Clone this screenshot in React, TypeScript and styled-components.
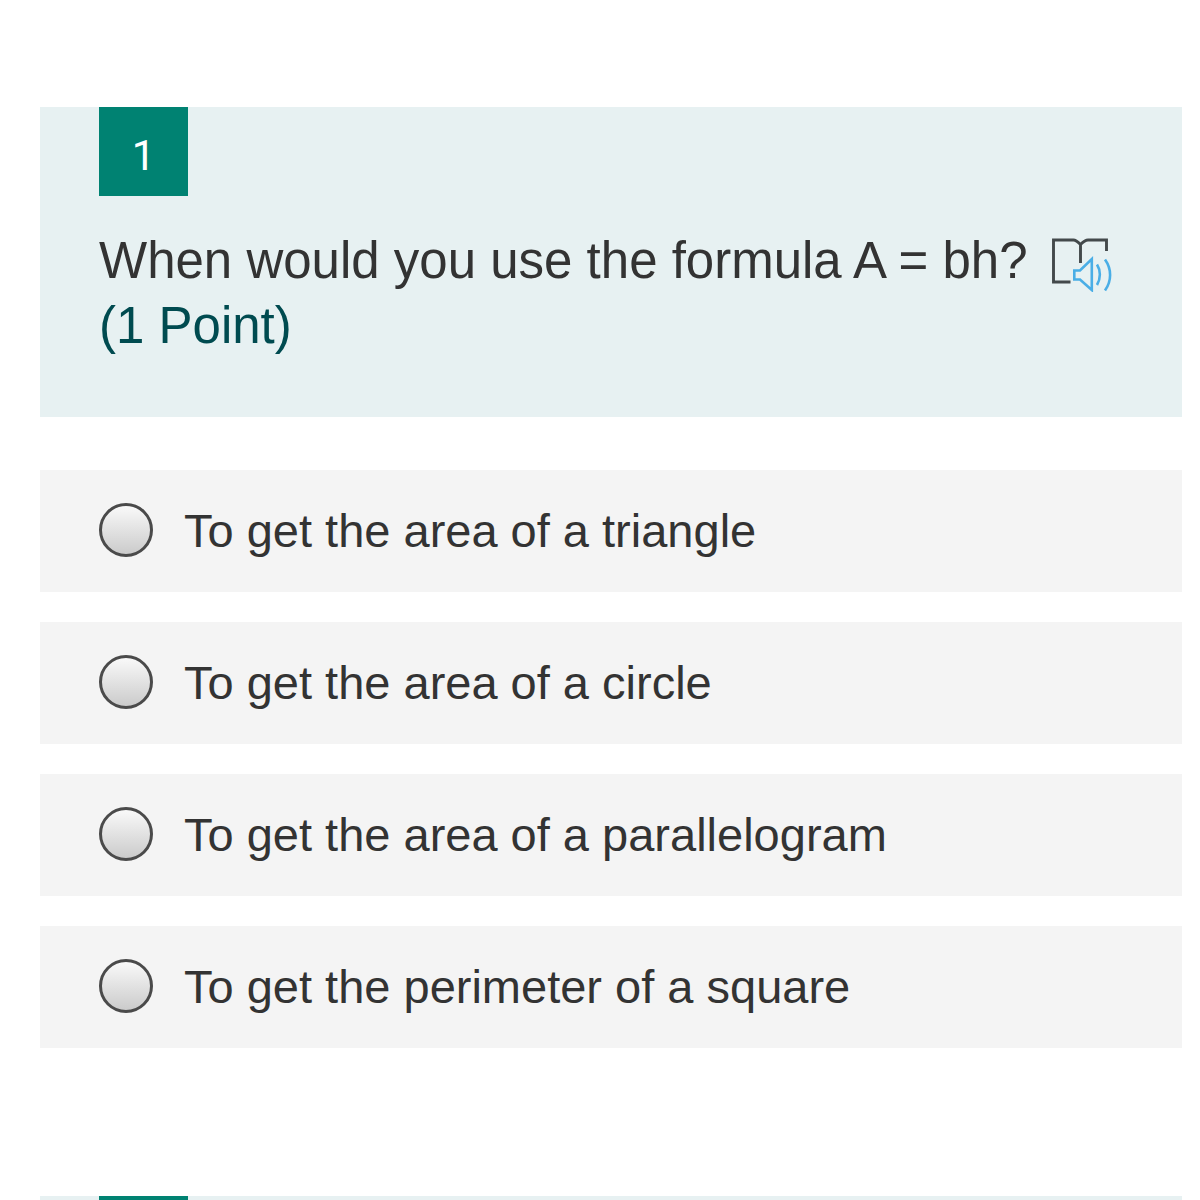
import React from "react";
import styled, { createGlobalStyle } from "styled-components";

const GlobalStyle = createGlobalStyle`
  *, *::before, *::after { box-sizing: border-box; }
  body {
    margin: 0;
    background: #ffffff;
    color: #333333;
    font-family: "Liberation Sans", Arial, Helvetica, sans-serif;
  }
`;

const Page = styled.main`
  height: 100vh;
  overflow: hidden;
  padding: 107px 18px 0 40px;
`;

const Question = styled.section`
  margin-bottom: 148px;
`;

const Header = styled.header`
  background: #e7f1f2;
  padding: 0 60px 59px 59px;
  margin-bottom: 53px;
`;

const Badge = styled.div`
  display: flex;
  align-items: center;
  justify-content: center;
  width: 89px;
  height: 89px;
  padding-top: 8px;
  margin-bottom: 32px;
  background: #008272;
  color: #ffffff;
  font-family: Roboto, "Liberation Sans", sans-serif;
  font-size: 42px;
  line-height: 48px;
`;

const Title = styled.h2`
  display: flex;
  align-items: center;
  gap: 24px;
  margin: 0;
  font-size: 51px;
  font-weight: 400;
  line-height: 65px;
`;

const Points = styled.p`
  margin: 0;
  color: #004b50;
  font-size: 51px;
  line-height: 65px;
`;

const ReaderButton = styled.button`
  display: flex;
  flex: none;
  padding: 9px 0 0;
  border: 0;
  background: none;
  cursor: pointer;
`;

const Options = styled.div`
  display: flex;
  flex-direction: column;
  gap: 30px;
`;

const Option = styled.label`
  display: flex;
  align-items: center;
  gap: 31px;
  min-height: 122px;
  padding: 0 59px 3px;
  background: #f4f4f4;
  font-size: 47px;
  line-height: 56px;
  cursor: pointer;
`;

const OptionText = styled.span`
  padding-top: 2px;
`;

const Radio = styled.input`
  appearance: none;
  flex: none;
  width: 54px;
  height: 54px;
  margin: 0;
  border: 3px solid #4a4a4a;
  border-radius: 50%;
  background: linear-gradient(#fcfcfc, #c8c8c8) border-box;

  &:checked {
    background: radial-gradient(circle, #333333 0 12px, #e4e4e4 13px);
  }
`;

const choices = [
  "To get the area of a triangle",
  "To get the area of a circle",
  "To get the area of a parallelogram",
  "To get the perimeter of a square",
];

function ReaderIcon() {
  return (
    <svg width="60" height="54" viewBox="12 13 60 54" fill="none" strokeWidth="2.9" aria-hidden="true">
      <path
        stroke="#43494b"
        d="M30.5 57H13.5V15H33.5C36 15 38 17 40.5 19.5C43 17 45 15 48 15H66.5V26M40.5 18.5V38"
      />
      <path
        stroke="#4aaee6"
        strokeWidth="2.6"
        d="M34.3 45.5H40L51.8 34V65L40 54.5H34.3ZM57 39.5C60.8 45.5 60.8 53.5 57 60M65 34.5C71.8 44 71.8 56 65 65.5"
      />
    </svg>
  );
}

export default function App() {
  return (
    <>
      <GlobalStyle />
      <Page>
        <Question>
          <Header>
            <Badge>1</Badge>
            <Title id="question-1">
              When would you use the formula A = bh?
              <ReaderButton type="button" aria-label="Immersive Reader">
                <ReaderIcon />
              </ReaderButton>
            </Title>
            <Points>(1 Point)</Points>
          </Header>
          <Options role="radiogroup" aria-labelledby="question-1">
            {choices.map((choice) => (
              <Option key={choice}>
                <Radio type="radio" name="question-1" value={choice} />
                <OptionText>{choice}</OptionText>
              </Option>
            ))}
          </Options>
        </Question>
        <Question>
          <Header>
            <Badge />
          </Header>
        </Question>
      </Page>
    </>
  );
}
